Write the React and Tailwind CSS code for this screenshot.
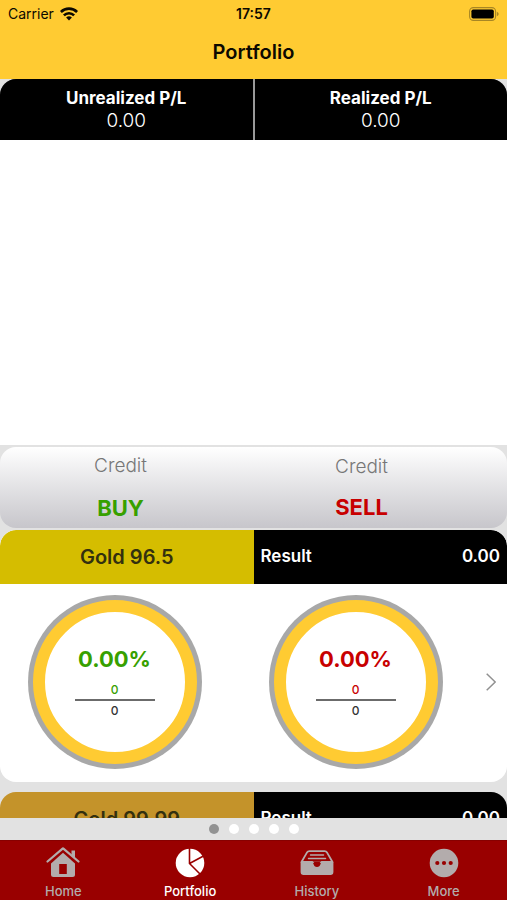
import React from "react";

function WifiIcon() {
  return (
    <svg viewBox="0 0 18 14" className="h-[14px] w-[18px]" aria-hidden="true">
      <g fill="none" stroke="#0c0900" strokeWidth="2.6">
        <path d="M.9 5a11.400 11.400 0 0 1 16.200 0" />
        <path d="M3.900 8.300a7.200 7.200 0 0 1 10.200 0" />
      </g>
      <path d="M9 13.600l-2.900-3a4.200 4.200 0 0 1 5.800 0z" fill="#0c0900" />
    </svg>
  );
}

function BatteryIcon() {
  return (
    <svg viewBox="0 0 30 14" className="h-[14px] w-[30px]" aria-hidden="true">
      <rect x="0.6" y="0.6" width="26" height="12.800" rx="3.800" fill="none" stroke="#a88624" strokeWidth="1.100" />
      <rect x="2.400" y="2.400" width="22.400" height="9.200" rx="1.800" fill="#000" />
      <path d="M27.900 4.800c2.300.8 2.300 3.600 0 4.400z" fill="#a88624" />
    </svg>
  );
}

function HomeIcon() {
  return (
    <svg viewBox="0 0 34 31" className="h-[31px] w-[34px]" aria-hidden="true">
      <path d="M17 5.800L29 16.500v11a2.500 2.500 0 0 1-2.500 2.500h-19A2.500 2.500 0 0 1 5 27.500v-11z" fill="currentColor" />
      <path d="M13.200 17h7.600v10h-7.600z" fill="#990000" />
      <path d="M1.500 15L16.300 2.100q.7-.6 1.400 0L32.500 15" fill="none" stroke="#990000" strokeWidth="4.600" />
      <path d="M25.500 3.500h3.500v8.300l-3.500-3z" fill="currentColor" />
      <path d="M1.500 14.500L16.300 1.800q.7-.6 1.400 0L32.500 14.500" fill="none" stroke="currentColor" strokeWidth="2.200" strokeLinecap="round" />
    </svg>
  );
}

function PieIcon() {
  return (
    <svg viewBox="0 0 30 30" className="h-[30px] w-[30px]" aria-hidden="true">
      <circle cx="15" cy="15" r="14.300" fill="currentColor" />
      <path d="M14.500 0v15.500L25 26M14.500 15.500L28 8.300" fill="none" stroke="#990000" strokeWidth="1.600" />
    </svg>
  );
}

function TrayIcon() {
  return (
    <svg viewBox="0 0 34 26" className="h-[26px] w-[34px]" aria-hidden="true">
      <path d="M9.500 1.200h15q1.700 0 2.600 1.400l5.400 9.400H1.500L6.900 2.600q.9-1.400 2.600-1.400z" fill="#990000" stroke="currentColor" strokeWidth="1.800" strokeLinejoin="round" />
      <path d="M.6 12H11c1.500 0 2.200.8 2.500 2 .4 1.800 1.700 3 3.500 3s3.100-1.200 3.500-3c.3-1.200 1-2 2.500-2h10.400v10a3 3 0 0 1-3 3H3.600a3 3 0 0 1-3-3z" fill="currentColor" />
      <path d="M12.500 11.200h9c-1.300.7-1.800 1.600-2 2.600-.3 1.300-1.200 2.200-2.500 2.200s-2.200-.9-2.500-2.200c-.2-1-.7-1.900-2-2.600z" fill="#990000" />
      <path d="M10.500 5h13M8.500 8.600h17" stroke="currentColor" strokeWidth="1.500" strokeLinecap="round" />
    </svg>
  );
}

function MoreIcon() {
  return (
    <svg viewBox="0 0 30 30" className="h-[30px] w-[30px]" aria-hidden="true">
      <circle cx="15" cy="15" r="14.300" fill="currentColor" />
      <g fill="#990000">
        <circle cx="8.300" cy="15" r="2.100" />
        <circle cx="15" cy="15" r="2.100" />
        <circle cx="21.700" cy="15" r="2.100" />
      </g>
    </svg>
  );
}

function Total({ label }) {
  return (
    <div className="flex flex-1 flex-col items-center bg-black pt-[7px] text-white">
      <span className="text-[17px] leading-6 font-bold">{label}</span>
      <span className="text-[19px] leading-[22px] font-light">0.00</span>
    </div>
  );
}

function Ring({ color }) {
  return (
    <div className="flex flex-1 justify-center pr-3">
      <div className="size-[174px] rounded-full bg-[#a8a8a8] p-[5px]">
        <div className="flex size-full flex-col items-center rounded-full border-[12px] border-[#ffcb32] bg-white pt-[31px]">
          <span className={"text-[22px] leading-8 font-bold " + color}>0.00%</span>
          <span className={"mt-[7px] text-[12px] leading-4 font-medium " + color}>0</span>
          <span className="mt-[1px] w-20 border-t-2 border-[#6b6b6b] pt-[2px] text-center text-[12px] leading-4 font-medium text-[#333]">0</span>
        </div>
      </div>
    </div>
  );
}

function ProductHeader({ name, tone }) {
  return (
    <header className="grid h-[54px] shrink-0 grid-cols-2 overflow-hidden rounded-t-2xl text-white">
      <h2 className={"flex items-center justify-center text-[20px] font-semibold text-[#33300f] " + tone}>{name}</h2>
      <div className="flex items-center justify-between bg-black px-[7px] text-[17px] font-semibold">
        <span>Result</span>
        <span>0.00</span>
      </div>
    </header>
  );
}

const tabs = [
  { label: "Home", Icon: HomeIcon },
  { label: "Portfolio", Icon: PieIcon, active: true },
  { label: "History", Icon: TrayIcon },
  { label: "More", Icon: MoreIcon },
];

export default function App() {
  return (
    <div className="flex h-screen flex-col overflow-hidden bg-[#e2e2e2] font-['Inter','Liberation_Sans',sans-serif]">
      <header className="h-[79px] shrink-0 bg-[#ffcb32] text-[#0c0900]">
        <div className="grid h-[27px] grid-cols-3 items-center px-2 text-[14px]">
          <div className="flex items-center gap-[6px]">
            <span>Carrier</span>
            <WifiIcon />
          </div>
          <span className="text-center font-semibold">17:57</span>
          <div className="flex justify-end"><BatteryIcon /></div>
        </div>
        <h1 className="text-center text-[20px] leading-[50px] font-semibold">Portfolio</h1>
      </header>

      <main className="flex min-h-0 flex-1 flex-col">
        <section className="flex h-[61px] shrink-0 gap-[2px] overflow-hidden rounded-t-2xl bg-[#999]">
          <Total label="Unrealized P/L" />
          <Total label="Realized P/L" />
        </section>
        <div className="flex-1 bg-white" />

        <section className="mt-[2px] flex h-[81px] shrink-0 rounded-2xl bg-linear-to-b from-white to-[#c7c6cb] pr-[25px]">
          <div className="flex flex-1 flex-col items-center justify-between pt-[7px] pb-1">
            <span className="text-[19px] leading-6 font-light text-[#777]">Credit</span>
            <span className="text-[22px] leading-8 font-bold text-[#37a000]">BUY</span>
          </div>
          <div className="flex flex-1 flex-col items-center justify-between pt-2 pb-[5px]">
            <span className="text-[19px] leading-6 font-light text-[#777]">Credit</span>
            <span className="text-[22px] leading-8 font-bold text-[#c80000]">SELL</span>
          </div>
        </section>

        <div className="mt-[2px] flex h-[288px] shrink-0 flex-col gap-[10px] overflow-x-hidden overflow-y-auto [scrollbar-width:none]">
          <article className="shrink-0 overflow-hidden rounded-2xl bg-white">
            <ProductHeader name="Gold 96.5" tone="bg-[#d5bd00]" />
            <div className="flex h-[198px] items-center pb-[2px]">
              <Ring color="text-[#37a000]" />
              <Ring color="text-[#c80000]" />
              <button type="button" aria-label="Gold 96.5 details" className="flex h-full w-[25px] items-center pl-1">
                <svg viewBox="0 0 10 18" className="h-[18px] w-[10px]" aria-hidden="true">
                  <path d="M.7.7L9.200 9 .7 17.300" fill="none" stroke="#909090" strokeWidth="1.500" />
                </svg>
              </button>
            </div>
          </article>
          <article className="shrink-0">
            <ProductHeader name="Gold 99.99" tone="bg-[#c4932a]" />
          </article>
        </div>

        <div className="flex h-[22px] shrink-0 items-center justify-center gap-[10px]">
          <span className="size-[10px] rounded-full bg-[#929292]" />
          <span className="size-[10px] rounded-full bg-white" />
          <span className="size-[10px] rounded-full bg-white" />
          <span className="size-[10px] rounded-full bg-white" />
          <span className="size-[10px] rounded-full bg-white" />
        </div>
      </main>

      <nav className="flex h-[60px] shrink-0 border-t border-[#870000] bg-[#990000]">
        {tabs.map(({ label, Icon, active }) => (
          <a
            key={label}
            href={"#" + label.toLowerCase()}
            aria-current={active ? "page" : undefined}
            className={"flex flex-1 flex-col items-center pt-[6px] " + (active ? "text-white" : "text-[#b3acac]")}
          >
            <span className="flex h-[31px] items-center"><Icon /></span>
            <span className="mt-[5px] text-[13px] leading-4 font-medium">{label}</span>
          </a>
        ))}
      </nav>
    </div>
  );
}
